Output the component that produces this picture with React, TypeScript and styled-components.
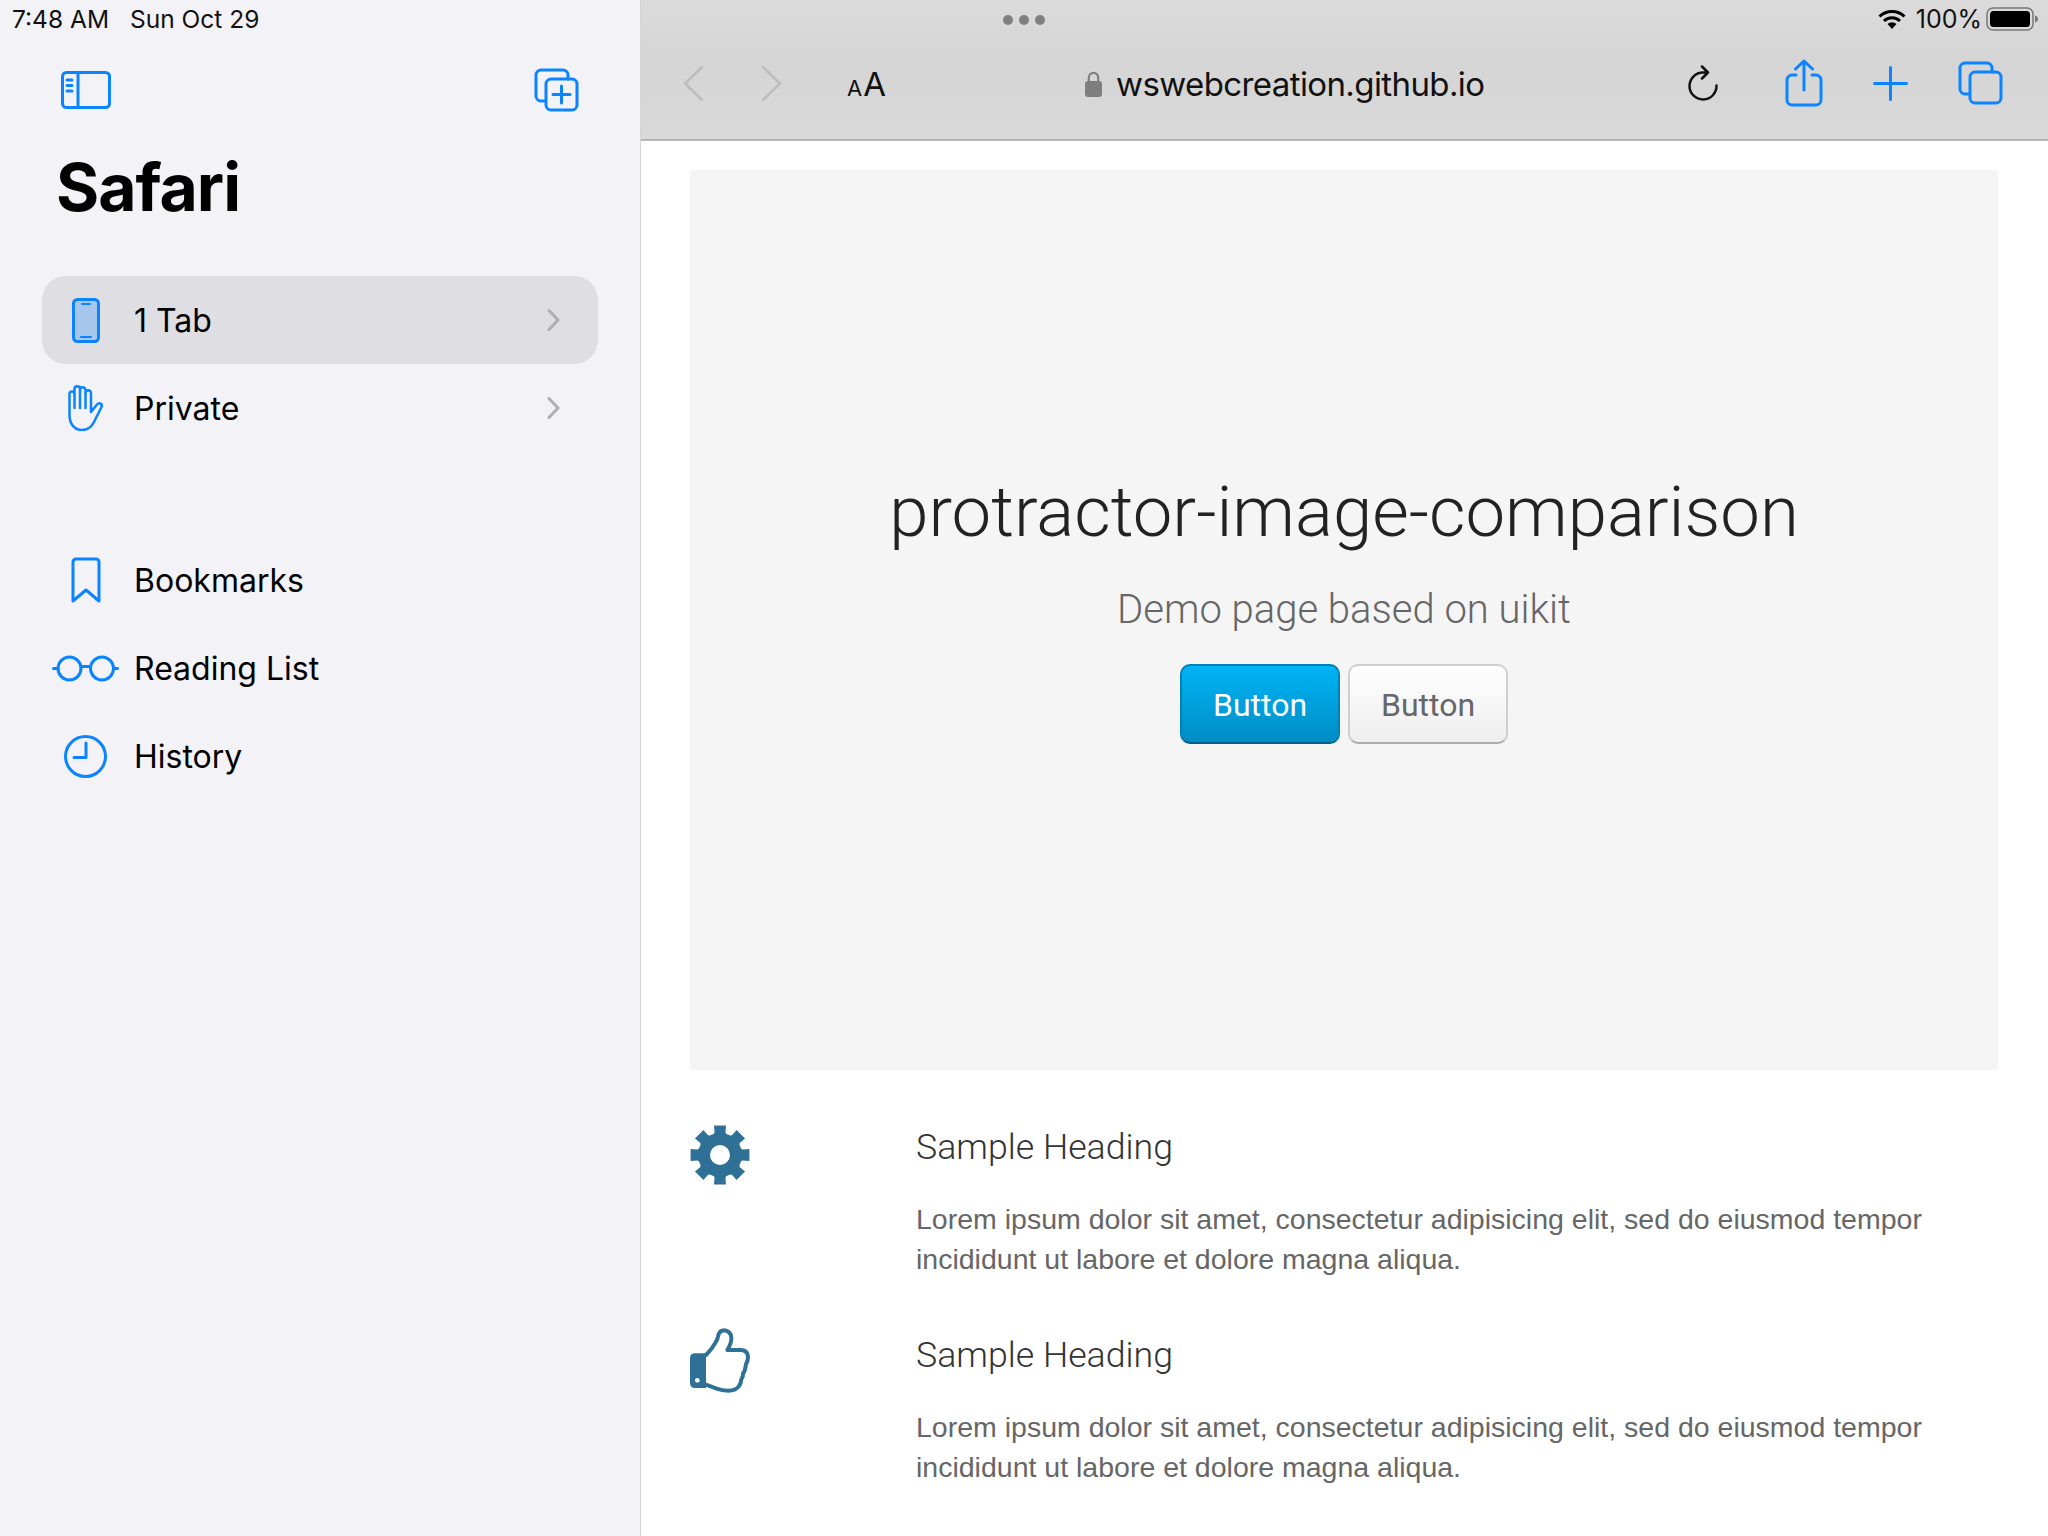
import * as React from "react";
import styled, { createGlobalStyle } from "styled-components";

const GlobalStyle = createGlobalStyle`
  html, body {
    margin: 0;
    padding: 0;
    background: #fff;
  }
  * {
    box-sizing: border-box;
  }
`;

const BLUE = "#0a84ff";

const Screen = styled.div`
  display: grid;
  grid-template-columns: 641px 1fr;
  width: 2048px;
  height: 1536px;
  overflow: hidden;
  font-family: "Inter", "Liberation Sans", sans-serif;
`;

/* sidebar */
const Sidebar = styled.aside`
  display: flex;
  flex-direction: column;
  background: #f2f2f7;
  border-right: 1px solid #d4d4d8;
`;
const StatusLeft = styled.div`
  display: flex;
  gap: 21px;
  height: 38px;
  align-items: center;
  padding-left: 12px;
  font-size: 24.5px;
  color: #111;
`;
const SideTools = styled.div`
  display: flex;
  justify-content: space-between;
  align-items: center;
  height: 64px;
  margin-top: 20px;
  padding: 0 61px 0 61px;
`;
const Title = styled.h1`
  margin: 24px 0 0 56px;
  font-size: 66px;
  line-height: 82px;
  font-weight: 700;
  letter-spacing: -1px;
  color: #000;
`;
const NavGroup = styled.nav<{ $top: number }>`
  display: flex;
  flex-direction: column;
  margin: ${(p) => p.$top}px 42px 0;
`;
const NavRow = styled.div<{ $active?: boolean }>`
  display: flex;
  align-items: center;
  height: 88px;
  border-radius: 24px;
  background: ${(p) => (p.$active ? "#dfdee3" : "transparent")};
`;
const NavIcon = styled.span`
  display: flex;
  justify-content: center;
  align-items: center;
  width: 87px;
  margin-right: 5px;
  flex: none;
`;
const NavLabel = styled.span`
  flex: 1;
  font-size: 32px;
  color: #000;
`;
const NavChevron = styled.svg`
  width: 15px;
  height: 24px;
  margin-right: 37px;
`;

/* main */
const Main = styled.main`
  display: flex;
  flex-direction: column;
  background: #fff;
`;
const TopBar = styled.header`
  position: relative;
  height: 141px;
  flex: none;
  background: linear-gradient(#dbdbdb, #d5d5d5 45%, #d9d9d9);
  border-bottom: 2px solid #b6b6b6;
`;
const StatusRight = styled.div`
  display: flex;
  justify-content: flex-end;
  align-items: center;
  gap: 4px;
  height: 38px;
  padding-right: 10px;
  font-size: 25px;
  color: #111;
`;
const Percent = styled.span`
  margin-left: 6px;
`;
const Dots = styled.div`
  position: absolute;
  top: 15px;
  left: 362px;
  display: flex;
  gap: 6px;
`;
const Dot = styled.i`
  width: 10px;
  height: 10px;
  border-radius: 50%;
  background: #7f7f7f;
`;
const Toolbar = styled.div`
  display: flex;
  align-items: center;
  height: 94px;
  padding: 0 0 4px 42px;
`;
const ToolSpacer = styled.div<{ $w: number }>`
  width: ${(p) => p.$w}px;
  flex: none;
`;
const AaText = styled.span`
  display: flex;
  align-items: baseline;
  width: 42px;
  padding-top: 2px;
  font-size: 33px;
  letter-spacing: 1px;
  color: #111;
  small {
    font-size: 22px;
  }
`;
const Address = styled.span`
  width: 368px;
  flex: none;
  padding-top: 2px;
  font-size: 33px;
  letter-spacing: -0.6px;
  color: #111;
  margin-left: 14px;
  white-space: nowrap;
`;

const Page = styled.div`
  padding: 29px 50px 0 49px;
`;
const Hero = styled.section`
  display: flex;
  flex-direction: column;
  align-items: center;
  height: 900px;
  padding-top: 296px;
  background: #f5f5f5;
`;
const HeroTitle = styled.h2`
  margin: 0;
  font-family: "Roboto", "Liberation Sans", sans-serif;
  font-weight: 300;
  font-size: 70.7px;
  line-height: 92px;
  color: #222;
`;
const HeroSub = styled.p`
  margin: 28px 0 0;
  font-family: "Roboto", "Liberation Sans", sans-serif;
  font-weight: 300;
  font-size: 40px;
  line-height: 48px;
  color: #666;
`;
const HeroButtons = styled.div`
  display: flex;
  gap: 8px;
  margin-top: 30px;
`;
const Btn = styled.button<{ $primary?: boolean }>`
  width: 160px;
  height: 80px;
  border-radius: 10px;
  font-family: "Roboto", "Liberation Sans", sans-serif;
  font-size: 32px;
  color: ${(p) => (p.$primary ? "#fff" : "#666")};
  background: ${(p) =>
    p.$primary
      ? "linear-gradient(#00b4f5, #008dc5)"
      : "linear-gradient(#fff, #eee)"};
  border: 2px solid ${(p) => (p.$primary ? "#0082b8" : "#cfcfcf")};
  border-bottom-color: ${(p) => (p.$primary ? "#005f87" : "#acacac")};
  padding: 2px 0 0;
`;
const Features = styled.section`
  display: flex;
  flex-direction: column;
  gap: 52px;
  margin-top: 53px;
`;
const Feature = styled.article`
  display: grid;
  grid-template-columns: 226px 1fr;
`;
const FeatureIcon = styled.div<{ $offset: number }>`
  margin-top: ${(p) => p.$offset}px;
`;
const FeatureHeading = styled.h3`
  margin: 0;
  font-family: "Roboto", "Liberation Sans", sans-serif;
  font-weight: 300;
  font-size: 35.7px;
  line-height: 48px;
  color: #333;
`;
const FeatureText = styled.p`
  margin: 28px 0 0;
  font-family: "Liberation Sans", sans-serif;
  font-size: 28.5px;
  line-height: 40px;
  color: #666;
`;

/* icons */
const strokeProps = {
  fill: "none",
  stroke: BLUE,
  strokeWidth: 3,
  strokeLinecap: "round" as const,
  strokeLinejoin: "round" as const,
};

const SidebarIcon = () => (
  <svg width="50" height="38" viewBox="0 0 50 38" {...strokeProps}>
    <rect x="1.5" y="1.5" width="47" height="35" rx="4" />
    <path d="M17 1.5v35M6 9h5M6 14.5h5M6 20h5" />
  </svg>
);
const NewTabIcon = () => (
  <svg width="45" height="44" viewBox="0 0 45 44" {...strokeProps}>
    <path d="M11 33H7a5 5 0 0 1-5-5V7a5 5 0 0 1 5-5h22a5 5 0 0 1 5 5v4" />
    <rect x="12" y="11" width="31" height="31" rx="5" />
    <path d="M27.5 18v17M19 26.5h17" />
  </svg>
);
const PhoneIcon = () => (
  <svg width="28" height="45" viewBox="0 0 28 45">
    <rect x="1.5" y="1.5" width="25" height="42" rx="4" fill="#a6c6eb" stroke={BLUE} strokeWidth="3" />
    <path d="M10 6h8M9 39h10" stroke={BLUE} strokeWidth="2" strokeLinecap="round" />
  </svg>
);
const HandIcon = () => (
  <svg width="35" height="46" viewBox="0 0 35 46" {...strokeProps} strokeWidth={2.5}>
    <path d="M6.5 23V9a2.5 2.5 0 0 0-5 0v21c0 9 5 15 12.5 15 7 0 10-4 12-8l7.5-15c1.5-3-2.5-5-4.5-2.5L23 27V8a2.75 2.75 0 0 0-5.5 0v15M17.5 23V5a2.75 2.75 0 0 0-5.5 0v18M12 23V4a2.75 2.75 0 0 0-5.500 0v5" />
  </svg>
);
const BookmarkIcon = () => (
  <svg width="30" height="46" viewBox="0 0 30 46" {...strokeProps}>
    <path d="M2 44V5a3 3 0 0 1 3-3h20a3 3 0 0 1 3 3v39L15 33Z" />
  </svg>
);
const GlassesIcon = () => (
  <svg width="67" height="27" viewBox="0 0 67 27" {...strokeProps}>
    <circle cx="17.5" cy="13.5" r="11.5" />
    <circle cx="50" cy="13.5" r="11.5" />
    <path d="M29 11.5h9.5M1.5 13.5H6M61.5 13.5h4" />
  </svg>
);
const ClockIcon = () => (
  <svg width="43" height="43" viewBox="0 0 43 43" {...strokeProps}>
    <circle cx="21.5" cy="21.5" r="20" />
    <path d="M22 8v14.5H10" />
  </svg>
);
const Chevron = () => (
  <NavChevron viewBox="0 0 15 24" fill="none" stroke="#aeaeb2" strokeWidth="3" strokeLinecap="round" strokeLinejoin="round">
    <path d="M3 2.5l9 9.5-9 9.5" />
  </NavChevron>
);
const NavArrow = ({ back }: { back?: boolean }) => (
  <svg width="21" height="37" viewBox="0 0 21 37" fill="none" stroke="#bdbdbd" strokeWidth="2.5" strokeLinecap="round" strokeLinejoin="round">
    <path d={back ? "M19 2L2 18.5 19 35" : "M2 2l17 16.5L2 35"} />
  </svg>
);
const LockIcon = () => (
  <svg width="17" height="27" viewBox="0 0 17 27">
    <path d="M3.8 13V7.5a4.7 4.7 0 0 1 9.4 0V13" fill="none" stroke="#7e7e7e" strokeWidth="2.2" />
    <rect x="0" y="11" width="17" height="16" rx="3" fill="#7e7e7e" />
  </svg>
);
const ReloadIcon = () => (
  <svg width="30" height="36" viewBox="0 0 30 36" fill="none" stroke="#111" strokeWidth="2.5" strokeLinecap="round" strokeLinejoin="round">
    <path d="M28.5 20.5A13.5 13.5 0 1 1 15 7.5h4M14 1.5L20 7.5l-6 6" />
  </svg>
);
const ShareIcon = () => (
  <svg width="38" height="48" viewBox="0 0 38 48" {...strokeProps}>
    <path d="M11 16H7a5 5 0 0 0-5 5v20a5 5 0 0 0 5 5h24a5 5 0 0 0 5-5V21a5 5 0 0 0-5-5h-4" />
    <path d="M19 31V2M10.5 10L19 2l8.5 8" />
  </svg>
);
const PlusIcon = () => (
  <svg width="35" height="35" viewBox="0 0 35 35" {...strokeProps}>
    <path d="M17.5 1.5v32M1.5 17.5h32" />
  </svg>
);
const TabsIcon = () => (
  <svg width="45" height="44" viewBox="0 0 45 44" {...strokeProps}>
    <path d="M11 33H7a5 5 0 0 1-5-5V7a5 5 0 0 1 5-5h22a5 5 0 0 1 5 5v4" />
    <rect x="12" y="11" width="31" height="31" rx="5" />
  </svg>
);
const WifiIcon = () => (
  <svg width="28" height="20" viewBox="0 0 28 20" fill="none" stroke="#000" strokeWidth="3">
    <path d="M1.5 7.5a18 18 0 0 1 25 0M6 12a11.5 11.5 0 0 1 16 0" />
    <path d="M9.5 15a6.5 6.5 0 0 1 9 0L14 20Z" fill="#000" stroke="none" />
  </svg>
);
const BatteryIcon = () => (
  <svg width="52" height="24" viewBox="0 0 52 24">
    <rect x="1" y="1" width="46" height="22" rx="6" fill="none" stroke="#777" strokeWidth="1.5" />
    <rect x="4" y="4" width="40" height="16" rx="3.5" fill="#000" />
    <path d="M49 8.5c2 .5 3 2 3 3.5s-1 3-3 3.500Z" fill="#777" />
  </svg>
);

// 8-tooth gear, outer radius 30, built around a 60x60 box
const gearPath = (() => {
  const pt = (r: number, a: number) =>
    `${(30 + r * Math.cos(a)).toFixed(2)} ${(30 + r * Math.sin(a)).toFixed(2)}`;
  const parts: string[] = [];
  for (let i = 0; i < 8; i++) {
    const c = (i * Math.PI) / 4 - Math.PI / 2;
    parts.push(
      `${i === 0 ? "M" : "L"}${pt(22, c - 0.3)}`,
      `L${pt(23, c - 0.24)}`,
      `L${pt(30, c - 0.2)}`,
      `L${pt(30, c + 0.2)}`,
      `L${pt(23, c + 0.24)}`,
      `L${pt(22, c + 0.3)}`
    );
  }
  return `${parts.join(" ")}Z M40 30a10 10 0 1 0-20 0a10 10 0 1 0 20 0Z`;
})();

const GearIcon = () => (
  <svg width="60" height="60" viewBox="0 0 60 60" display="block">
    <path d={gearPath} fill="#2f7196" fillRule="evenodd" />
  </svg>
);
const ThumbIcon = () => (
  <svg width="60" height="65" viewBox="60 715 180 193" display="block">
    <path d="M60 805q0-15 15-15h33v104H75q-15 0-15-15Z" fill="#2f7196" />
    <circle cx="82" cy="871" r="7" fill="#fff" />
    <path
      d="M108 795Q126 777 135 760Q143 748 145 736Q149 721 163 721Q182 723 184 743Q185 759 172 780H214Q233 782 234 800Q234 814 228 822Q227 830 225 838Q224 846 219 850Q220 860 214 868Q213 880 207 888Q198 902 175 902Q155 902 140 896L108 884"
      fill="none"
      stroke="#2f7196"
      strokeWidth="12"
      strokeLinejoin="round"
      strokeLinecap="round"
    />
  </svg>
);

const lorem =
  "Lorem ipsum dolor sit amet, consectetur adipisicing elit, sed do eiusmod tempor incididunt ut labore et dolore magna aliqua.";

const features = [
  { key: "gear", icon: <GearIcon />, offset: 2 },
  { key: "thumb", icon: <ThumbIcon />, offset: -3 },
];

const App: React.FC = () => (
  <>
    <GlobalStyle />
    <Screen>
      <Sidebar>
        <StatusLeft>
          <span>7:48 AM</span>
          <span>Sun Oct 29</span>
        </StatusLeft>
        <SideTools>
          <SidebarIcon />
          <NewTabIcon />
        </SideTools>
        <Title>Safari</Title>
        <NavGroup $top={48}>
          <NavRow $active>
            <NavIcon><PhoneIcon /></NavIcon>
            <NavLabel>1 Tab</NavLabel>
            <Chevron />
          </NavRow>
          <NavRow>
            <NavIcon><HandIcon /></NavIcon>
            <NavLabel>Private</NavLabel>
            <Chevron />
          </NavRow>
        </NavGroup>
        <NavGroup $top={84}>
          <NavRow>
            <NavIcon><BookmarkIcon /></NavIcon>
            <NavLabel>Bookmarks</NavLabel>
          </NavRow>
          <NavRow>
            <NavIcon><GlassesIcon /></NavIcon>
            <NavLabel>Reading List</NavLabel>
          </NavRow>
          <NavRow>
            <NavIcon><ClockIcon /></NavIcon>
            <NavLabel>History</NavLabel>
          </NavRow>
        </NavGroup>
      </Sidebar>
      <Main>
        <TopBar>
          <StatusRight>
            <WifiIcon />
            <Percent>100%</Percent>
            <BatteryIcon />
          </StatusRight>
          <Dots>
            <Dot />
            <Dot />
            <Dot />
          </Dots>
          <Toolbar>
            <NavArrow back />
            <ToolSpacer $w={57} />
            <NavArrow />
            <ToolSpacer $w={65} />
            <AaText><small>A</small>A</AaText>
            <ToolSpacer $w={196} />
            <LockIcon />
            <Address>wswebcreation.github.io</Address>
            <ToolSpacer $w={204} />
            <ReloadIcon />
            <ToolSpacer $w={67} />
            <ShareIcon />
            <ToolSpacer $w={50} />
            <PlusIcon />
            <ToolSpacer $w={50} />
            <TabsIcon />
          </Toolbar>
        </TopBar>
        <Page>
          <Hero>
            <HeroTitle>protractor-image-comparison</HeroTitle>
            <HeroSub>Demo page based on uikit</HeroSub>
            <HeroButtons>
              <Btn $primary>Button</Btn>
              <Btn>Button</Btn>
            </HeroButtons>
          </Hero>
          <Features>
            {features.map((f) => (
              <Feature key={f.key}>
                <FeatureIcon $offset={f.offset}>{f.icon}</FeatureIcon>
                <div>
                  <FeatureHeading>Sample Heading</FeatureHeading>
                  <FeatureText>{lorem}</FeatureText>
                </div>
              </Feature>
            ))}
          </Features>
        </Page>
      </Main>
    </Screen>
  </>
);

export default App;
